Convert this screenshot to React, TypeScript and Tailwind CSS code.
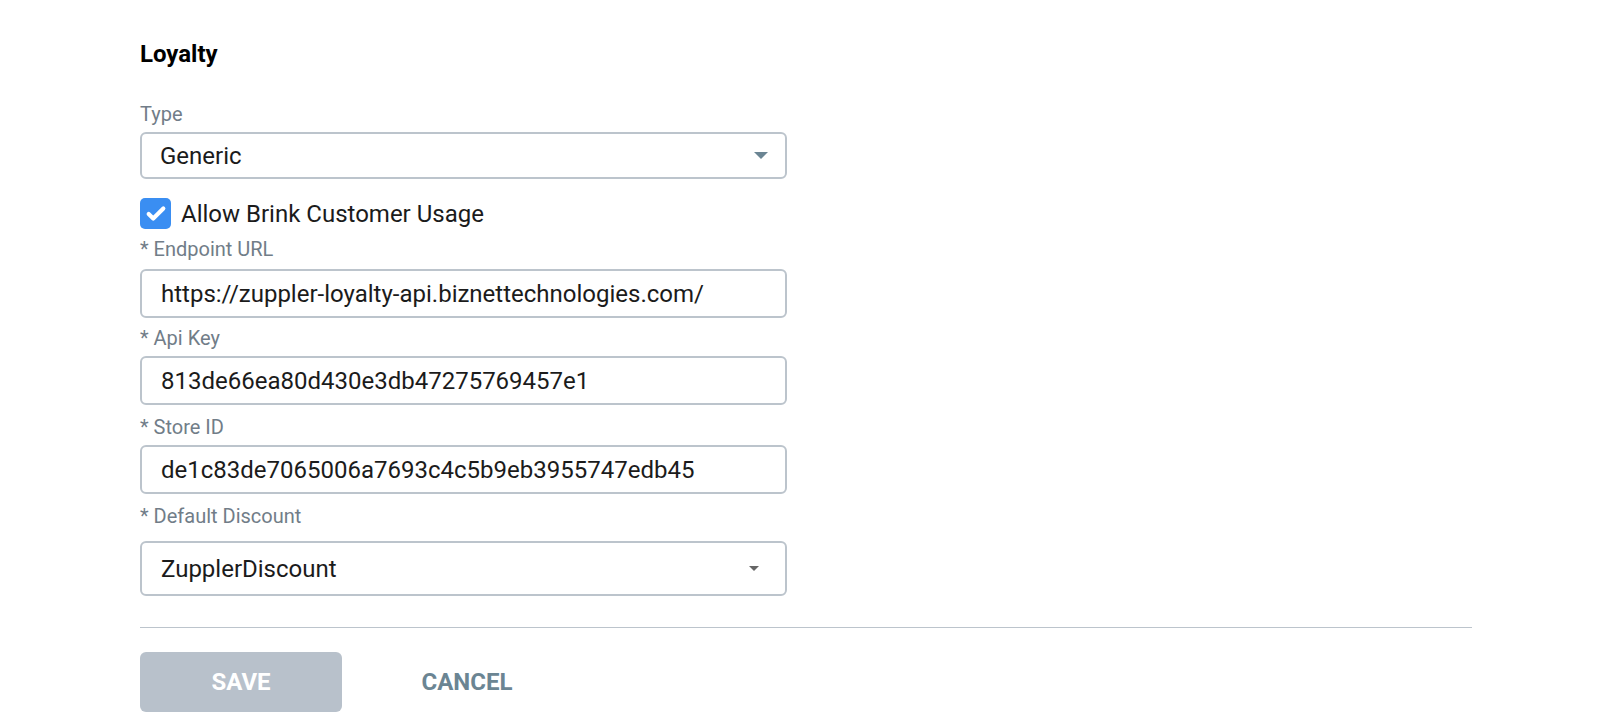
import { Check } from 'lucide-react';

const font = { fontFamily: 'Roboto, "Liberation Sans", sans-serif' };

function Label({ text }: { text: string }) {
  return <div className="h-6 text-[20px] leading-6 text-[#717d88]">{text}</div>;
}

function TextField({ value }: { value: string }) {
  return (
    <div className="flex h-[49px] w-[647px] items-center rounded-[6px] border-2 border-[#bcc4cc] px-[19px] text-[24px] text-[#1b1b1b]">
      {value}
    </div>
  );
}

function App() {
  return (
    <div className="min-h-screen bg-white pl-[140px] pt-[40px]" style={font}>
      <h2 className="h-7 text-[24px] font-bold leading-7 text-black">Loyalty</h2>

      <div className="mt-[34px]">
        <Label text="Type" />
        <div className="mt-[6px] flex h-[47px] w-[647px] items-center justify-between rounded-[6px] border-2 border-[#bcc4cc] pl-[18px] pr-[17px] text-[24px] text-[#1b1b1b]">
          <span>Generic</span>
          <span className="h-0 w-0 border-x-[7px] border-t-[7px] border-x-transparent border-t-[#6b8593]" />
        </div>
      </div>

      <label className="mt-[19px] flex h-[31px] items-center gap-[10px] text-[24px] text-[#1b1b1b]">
        <span className="flex h-[31px] w-[31px] items-center justify-center rounded-[5px] bg-[#3a8ef2]">
          <Check className="h-[22px] w-[22px] text-white" strokeWidth={4.5} />
        </span>
        Allow Brink Customer Usage
      </label>

      <div className="mt-[8px]">
        <Label text="* Endpoint URL" />
        <div className="mt-[8px]">
          <TextField value="https://zuppler-loyalty-api.biznettechnologies.com/" />
        </div>
      </div>

      <div className="mt-[8px]">
        <Label text="* Api Key" />
        <div className="mt-[6px]">
          <TextField value="813de66ea80d430e3db47275769457e1" />
        </div>
      </div>

      <div className="mt-[10px]">
        <Label text="* Store ID" />
        <div className="mt-[6px]">
          <TextField value="de1c83de7065006a7693c4c5b9eb3955747edb45" />
        </div>
      </div>

      <div className="mt-[10px]">
        <Label text="* Default Discount" />
        <div className="mt-[13px] flex h-[55px] w-[647px] items-center justify-between rounded-[6px] border-2 border-[#bcc4cc] pl-[19px] pr-[26px] text-[24px] text-[#1b1b1b]">
          <span>ZupplerDiscount</span>
          <span className="h-0 w-0 border-x-[5px] border-t-[5px] border-x-transparent border-t-[#666666]" />
        </div>
      </div>

      <div className="mt-[31px] h-px w-[1332px] bg-[#bcc4cc]" />

      <div className="mt-[24px] flex items-center">
        <button className="h-[60px] w-[202px] rounded-[6px] bg-[#b8c1cb] text-[24px] font-bold uppercase text-white">
          Save
        </button>
        <button className="ml-[47px] h-[60px] w-[156px] text-[24px] font-bold uppercase text-[#6b8593]">
          Cancel
        </button>
      </div>
    </div>
  );
}

export default App;
